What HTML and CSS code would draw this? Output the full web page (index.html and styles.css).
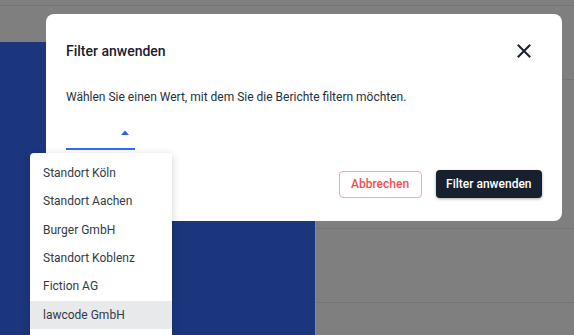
FILE: index.html
```html
<!DOCTYPE html>
<html lang="de">
<head>
<meta charset="utf-8">
<title>Filter anwenden</title>
<link rel="stylesheet" href="styles.css">
</head>
<body>
<div class="page">
  <div class="topbar"></div>
  <div class="main">
    <div class="block"></div>
    <div class="rows">
      <div class="row r1"></div>
      <div class="row r2"></div>
      <div class="row r3"></div>
    </div>
  </div>

  <div class="modal" role="dialog" aria-labelledby="dlg-title">
    <div class="modal-header">
      <h2 class="modal-title" id="dlg-title">Filter anwenden</h2>
      <button class="close-btn" aria-label="Schließen">
        <svg width="14" height="14" viewBox="0 0 14 14"><path d="M1.5 1.5 L12.5 12.5 M12.5 1.5 L1.5 12.5" stroke="#1a202c" stroke-width="2" stroke-linecap="square" fill="none"/></svg>
      </button>
    </div>
    <p class="modal-text">Wählen Sie einen Wert, mit dem Sie die Berichte filtern möchten.</p>
    <div class="select">
      <svg class="caret" width="8" height="5" viewBox="0 0 8 5"><path d="M0 5 L4 0.5 L8 5 Z" fill="#2563eb"/></svg>
    </div>
    <div class="modal-footer">
      <button class="btn btn-outline">Abbrechen</button>
      <button class="btn btn-primary">Filter anwenden</button>
    </div>
  </div>

  <ul class="menu">
    <li class="menu-item">Standort Köln</li>
    <li class="menu-item">Standort Aachen</li>
    <li class="menu-item">Burger GmbH</li>
    <li class="menu-item">Standort Koblenz</li>
    <li class="menu-item">Fiction AG</li>
    <li class="menu-item active">lawcode GmbH</li>
  </ul>
</div>
</body>
</html>
```

FILE: styles.css
```css
* { box-sizing: border-box; }
html, body { margin: 0; padding: 0; }
body {
  width: 574px;
  height: 335px;
  overflow: hidden;
  background: #7f7f7f;
  font-family: Roboto, "Liberation Sans", Arial, sans-serif;
}
.page {
  position: relative;
  width: 574px;
  height: 335px;
  overflow: hidden;
}
.topbar {
  height: 6px;
  border-bottom: 1px solid #757575;
}
.main {
  display: flex;
  margin-top: 36px;
}
.block {
  width: 316px;
  height: 293px;
  background: #1b367c;
  border-right: 1px solid #8a8a8a;
}
.rows { flex: 1; }
.row { border-bottom: 1px solid #757575; }
.r1 { height: 38px; }
.r2 { height: 149px; }
.r3 { height: 74px; }

.modal {
  position: absolute;
  left: 46px;
  top: 14px;
  width: 516px;
  height: 207px;
  background: #fff;
  border-radius: 8px;
  padding: 26px 20px 0 20px;
  display: flex;
  flex-direction: column;
}
.modal-header {
  display: flex;
  justify-content: space-between;
  align-items: center;
  height: 21px;
}
.modal-title {
  margin: 0;
  font-size: 14px;
  line-height: 20px;
  font-weight: 500;
  color: #1a202c;
}
.close-btn {
  border: 0;
  background: none;
  padding: 0;
  margin-right: 11px;
  width: 14px;
  height: 14px;
  display: flex;
}
.modal-text {
  margin: 27px 0 0 0;
  font-size: 12px;
  line-height: 18px;
  color: #262f3d;
}
.select {
  width: 69px;
  margin-top: 20px;
  display: flex;
  justify-content: flex-end;
  padding: 4px 6px 13px 0;
  border-bottom: 2px solid #2f6bf5;
}
.caret { display: block; }
.modal-footer {
  display: flex;
  justify-content: flex-end;
  align-items: center;
  gap: 14px;
  margin-top: 20px;
}
.btn {
  font-family: inherit;
  font-size: 12px;
  font-weight: 500;
  height: 28px;
  border-radius: 4px;
  cursor: pointer;
}
.btn-outline {
  background: #fff;
  color: #f05252;
  border: 1px solid #fca5a5;
  padding: 0 11.5px;
  height: 27px;
}
.btn-primary {
  background: #17212e;
  color: #fff;
  border: 0;
  padding: 0 10.5px;
  box-shadow: 0 1px 3px rgba(0,0,0,0.35);
}

.menu {
  position: absolute;
  left: 30px;
  top: 153px;
  width: 142px;
  margin: 0;
  padding: 6px 0 8px 0;
  list-style: none;
  background: #fff;
  border-radius: 4px 0 0 0;
  box-shadow: 0 2px 8px rgba(0,0,0,0.18);
}
.menu-item {
  height: 28.33px;
  line-height: 28.33px;
  padding-left: 13px;
  font-size: 12px;
  color: #323a48;
  white-space: nowrap;
}
.menu-item.active { background: #e8e9eb; }
```
